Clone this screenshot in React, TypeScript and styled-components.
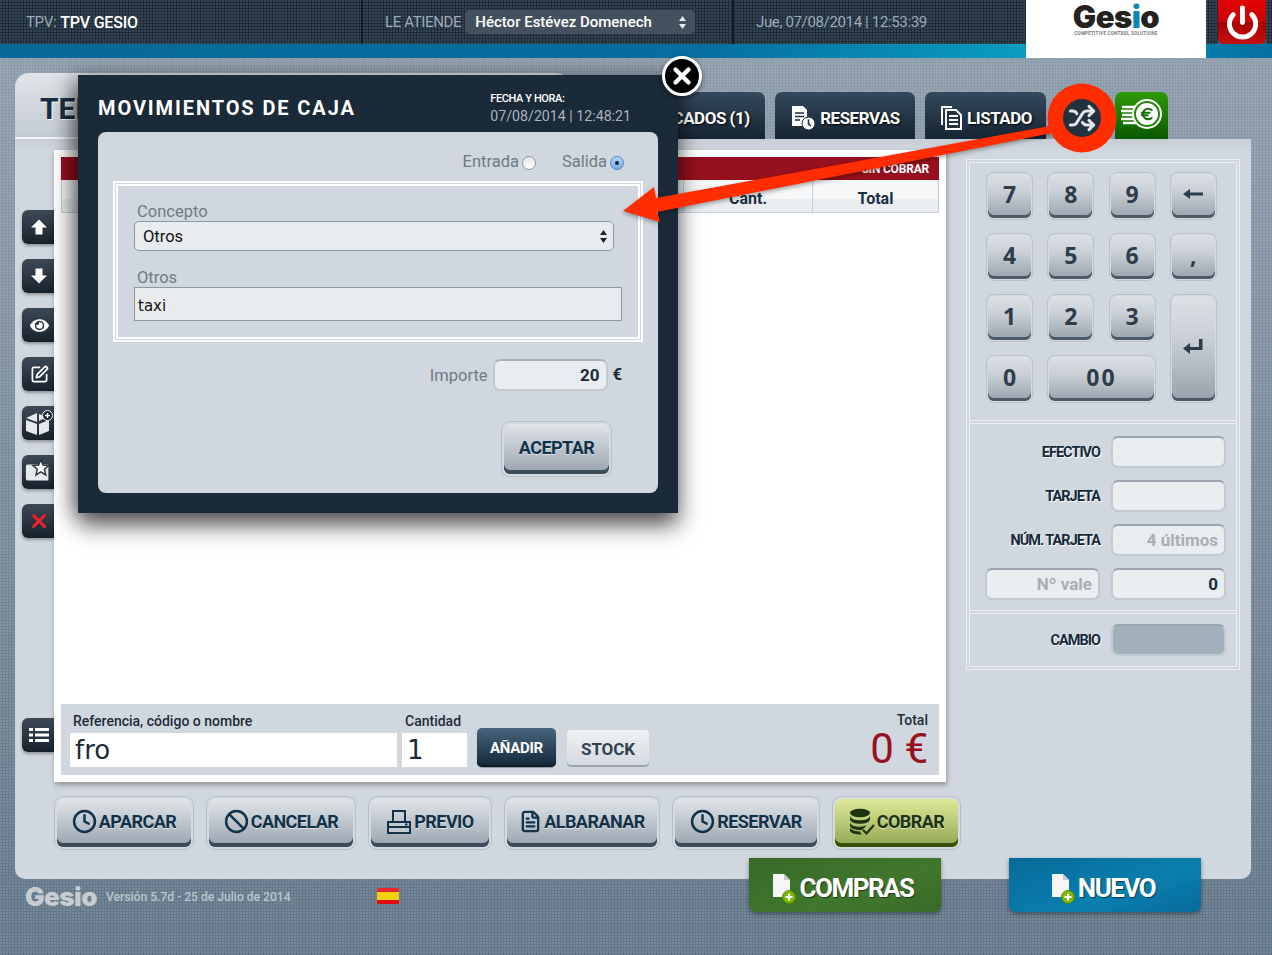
import React from "react";
import styled, { createGlobalStyle } from "styled-components";
import { Ban, Clock, Euro as EuroSign, FileText, Power, Shuffle, SquarePen, X } from "lucide-react";
import { FaEye } from "react-icons/fa";

const GlobalStyle = createGlobalStyle`
  html, body {
    margin: 0;
    padding: 0;
    background: #64788a;
  }
  * {
    box-sizing: border-box;
  }
`;

const font = `Roboto, "Liberation Sans", sans-serif`;
const digitFont = `"DejaVu Sans", Roboto, sans-serif`;
const keyFont = `"Open Sans", "DejaVu Sans", Roboto, sans-serif`;
const dots = `radial-gradient(circle at 1px 1px, rgba(255,255,255,.12) 1px, transparent 1px)`;
const inkBlue = "#12324a";
const panelGray = "#d0d7de";

const Page = styled.div`
  position: relative;
  width: 1272px;
  height: 955px;
  overflow: hidden;
  font-family: ${font};
  background-image: ${dots}, linear-gradient(180deg, #8c9baa 60px, #8292a2 300px, #63778a 900px);
  background-size: 3px 3px, auto;
`;

/* top bar */
const TopBar = styled.header`
  display: flex;
  height: 58px;
  background-image: linear-gradient(
    90deg,
    #07699a 0,
    #066f9f 55%,
    #0a9fc2 82%,
    #066f9f 100%
  );
`;
const TopDark = styled.div`
  display: flex;
  flex: 1;
  height: 44px;
  background-color: #1c2c3b;
  background-image: ${dots};
  background-size: 3px 3px;
`;
const TopCell = styled.div<{ $w: number; $pad: number }>`
  display: flex;
  align-items: center;
  width: ${(p) => p.$w}px;
  padding-left: ${(p) => p.$pad}px;
  border-right: 2px solid #111c26;
  font-size: 15px;
  letter-spacing: -0.35px;
  color: #9dabb7;
  &:last-child {
    border-right: none;
    flex: 1;
  }
`;
const TopStrong = styled.strong`
  margin-left: 4px;
  font-size: 16px;
  font-weight: 500;
  letter-spacing: -0.2px;
  color: #fff;
`;
const UserSelect = styled.div`
  display: flex;
  align-items: center;
  justify-content: space-between;
  width: 230px;
  height: 24px;
  margin-left: 4px;
  padding: 0 8px 0 10px;
  border-radius: 5px;
  background: #44505e;
  font-size: 15px;
  font-weight: 500;
  letter-spacing: 0;
  color: #fff;
`;
const LogoCell = styled.div`
  display: flex;
  flex-direction: column;
  align-items: center;
  width: 180px;
  height: 58px;
  padding-top: 3px;
  background: #fff;
`;
const LogoWord = styled.span<{ $size: number; $color: string }>`
  font-family: "Inter", ${font};
  font-weight: 900;
  font-size: ${(p) => p.$size}px;
  line-height: 0.9;
  letter-spacing: -0.5px;
  color: ${(p) => p.$color};
`;
const LogoDot = styled.span<{ $color: string }>`
  color: ${(p) => p.$color};
`;
const LogoClaim = styled.span`
  font-size: 4.5px;
  font-weight: 700;
  line-height: 5px;
  letter-spacing: 0.25px;
  color: #777;
`;
const TopGap = styled.div`
  width: 12px;
  height: 44px;
  background-color: #1c2c3b;
  background-image: ${dots};
  background-size: 3px 3px;
`;
const PowerButton = styled.div`
  display: flex;
  align-items: center;
  justify-content: center;
  width: 48px;
  height: 44px;
  border-radius: 0 0 5px 5px;
  background: linear-gradient(180deg, #e30404 0, #c80202 50%, #a80000 51%, #c41010 100%);
  color: #fff;
`;
const TopEnd = styled(TopGap)`
  width: 6px;
`;

/* main panel */
const Body = styled.div`
  width: 1236px;
  margin: 15px 0 0 15px;
`;
const TabRow = styled.div`
  display: flex;
  align-items: flex-end;
  height: 66px;
`;
const TitleTab = styled.div`
  display: flex;
  align-items: center;
  align-self: stretch;
  width: 555px;
  padding: 6px 0 0 25px;
  border-radius: 14px 14px 0 0;
  border-bottom: 2px solid #f0f3f5;
  background: linear-gradient(180deg, #dfe4e8 0, #c4cbd2 100%);
  font-size: 30px;
  font-weight: 700;
  color: #1b2f44;
  text-shadow: 1px 1px 0 #fff;
`;
const Tab = styled.div<{ $w: number; $ml?: number; $pr?: number }>`
  display: flex;
  align-items: center;
  justify-content: center;
  gap: 4px;
  width: ${(p) => p.$w}px;
  height: 47px;
  margin-left: ${(p) => p.$ml ?? 10}px;
  padding-top: 4px;
  padding-right: ${(p) => p.$pr ?? 0}px;
  border-radius: 7px 7px 0 0;
  background: linear-gradient(180deg, #34495c 0, #162433 100%);
  font-size: 17px;
  font-weight: 700;
  letter-spacing: -0.5px;
  white-space: nowrap;
  color: #fff;
  text-shadow: 1px 1px 2px #000;
`;
const MoneyTab = styled(Tab)`
  padding-top: 0;
  padding-bottom: 3px;
  background: linear-gradient(180deg, #2f9a08 0, #0a5800 100%);
`;
const Panel = styled.div`
  display: flex;
  height: 740px;
  border-radius: 0 0 10px 10px;
  background: linear-gradient(180deg, #c7ced5 0, ${panelGray} 12px);
`;
const LeftArea = styled.div`
  display: flex;
  flex-direction: column;
  width: 946px;
  padding-top: 11px;
`;
const WorkRow = styled.div`
  display: flex;
  height: 632px;
`;
const Rail = styled.div`
  display: flex;
  flex-direction: column;
  gap: 15px;
  width: 39px;
  padding: 60px 0 0 7px;
`;
const RailButton = styled.div<{ $push?: number }>`
  display: flex;
  align-items: center;
  justify-content: center;
  width: 32px;
  height: 34px;
  margin-top: ${(p) => p.$push ?? 0}px;
  padding-left: 2px;
  border-radius: 6px 0 0 6px;
  background: linear-gradient(180deg, #3d4a56 0, #17222c 100%);
  box-shadow: 0 2px 3px rgba(0, 0, 0, 0.3);
  color: #fff;
`;
const Sheet = styled.div`
  display: flex;
  flex-direction: column;
  width: 892px;
  padding: 7px;
  background: #fff;
  box-shadow: 1px 3px 5px rgba(0, 0, 0, 0.3);
`;
const RedBar = styled.div`
  height: 23px;
  padding: 5px 10px 0 0;
  background: #97101f;
  text-align: right;
  font-size: 12px;
  font-weight: 700;
  letter-spacing: -0.2px;
  color: #fff;
`;
const TableHead = styled.div`
  display: flex;
  height: 33px;
  border: 1px solid #c6ced6;
  border-top: none;
  background: linear-gradient(180deg, #f6f7f8 0, #f6f7f8 60%, #e9edf0 61%);
`;
const HeadCell = styled.div<{ $w?: number }>`
  display: flex;
  align-items: center;
  justify-content: center;
  flex: ${(p) => (p.$w ? `0 0 ${p.$w}px` : 1)};
  padding-top: 4px;
  border-left: 1px solid #c6ced6;
  font-size: 16px;
  font-weight: 700;
  color: #1b2f44;
  &:first-child {
    border-left: none;
  }
`;
const TableBody = styled.div`
  flex: 1;
`;
const EntryBar = styled.div`
  display: flex;
  align-items: flex-end;
  height: 71px;
  padding: 0 11px 8px 9px;
  background: ${panelGray};
`;
const EntryField = styled.div<{ $w: number; $ml?: number }>`
  display: flex;
  flex-direction: column;
  width: ${(p) => p.$w}px;
  margin-left: ${(p) => p.$ml ?? 0}px;
`;
const EntryLabel = styled.div`
  height: 20px;
  padding-left: 3px;
  font-size: 14px;
  font-weight: 500;
  color: #1f2d3a;
`;
const EntryInput = styled.div`
  height: 34px;
  padding-left: 5px;
  background: #fff;
  font-family: ${digitFont};
  font-size: 26px;
  line-height: 34px;
  color: #1c2a36;
`;
const AddButton = styled.div`
  display: flex;
  align-items: center;
  justify-content: center;
  width: 79px;
  height: 39px;
  margin-left: 10px;
  border-radius: 5px;
  background: linear-gradient(180deg, #48647c 0, #13273a 100%);
  box-shadow: inset 0 -2px 0 #0f1c28, 0 1px 1px rgba(0, 0, 0, 0.3);
  font-size: 15px;
  font-weight: 700;
  letter-spacing: -0.3px;
  color: #fff;
`;
const StockButton = styled.div`
  display: flex;
  align-items: center;
  justify-content: center;
  width: 82px;
  height: 37px;
  margin-left: 11px;
  border-radius: 4px;
  background: linear-gradient(180deg, #f0f2f4 0, #d3d8dd 100%);
  box-shadow: inset 0 -2px 0 #9aa4ad;
  font-size: 17px;
  font-weight: 700;
  letter-spacing: -0.1px;
  color: #33424f;
`;
const TotalBox = styled.div`
  display: flex;
  flex-direction: column;
  align-items: flex-end;
  margin-left: auto;
`;
const TotalLabel = styled.div`
  height: 16px;
  font-size: 14px;
  line-height: 16px;
  font-weight: 500;
  color: #1f2d3a;
`;
const TotalValue = styled.div`
  font-size: 42px;
  line-height: 42px;
  height: 42px;
  margin-bottom: -3px;
  color: #97101f;
`;

/* action buttons */
const ActionRow = styled.div`
  display: flex;
  gap: 12px;
  margin-top: 14px;
  padding-left: 39px;
`;
const ActionButton = styled.div<{ $w: number; $go?: boolean }>`
  display: flex;
  align-items: center;
  justify-content: center;
  gap: 2px;
  width: ${(p) => p.$w}px;
  height: 54px;
  padding-bottom: 3px;
  border: 3px solid transparent;
  border-radius: 9px;
  outline: 1px solid #b6bfc8;
  outline-offset: -1px;
  background: ${(p) =>
      p.$go
        ? "linear-gradient(180deg, #dfe99a 0, #8fa552 100%)"
        : "linear-gradient(180deg, #e1e5ea 0, #98a2ad 100%)"}
      padding-box,
    #d4dae0 border-box;
  box-shadow: inset 0 -4px 0 ${(p) => (p.$go ? "#3b4f05" : "#3c4c5b")};
  font-size: 18px;
  font-weight: 700;
  letter-spacing: -0.55px;
  color: ${(p) => (p.$go ? "#1c3310" : inkBlue)};
  text-shadow: 0 1px 0 rgba(255, 255, 255, 0.6);
`;

/* right column */
const RightColumn = styled.div`
  width: 274px;
  height: 511px;
  margin: 20px 0 0 5px;
  border: 4px double #eceff2;
`;
const Section = styled.div<{ $h: number }>`
  height: ${(p) => p.$h}px;
  & + & {
    border-top: 4px double #eceff2;
  }
`;
const KeyGrid = styled.div`
  display: grid;
  grid-template-columns: repeat(4, 47px);
  grid-auto-rows: 48px;
  column-gap: 14.3px;
  row-gap: 13px;
  padding: 9px 0 0 16px;
`;
const Key = styled.div<{ $wide?: boolean; $tall?: boolean }>`
  display: flex;
  align-items: center;
  justify-content: center;
  padding-bottom: 4px;
  border: 2px solid transparent;
  border-radius: 8px;
  outline: 1px solid #b9c1c9;
  outline-offset: -1px;
  background: linear-gradient(180deg, #dce1e6 0, #c9cfd5 40%, #98a2ac 100%) padding-box,
    #d4dae0 border-box;
  box-shadow: inset 0 -3px 0 #4c5a67;
  font-family: ${keyFont};
  font-size: 23px;
  font-weight: 700;
  color: #2e3d4b;
  grid-column: ${(p) => (p.$wide ? "span 2" : p.$tall ? "4" : "auto")};
  grid-row: ${(p) => (p.$tall ? "3 / 5" : "auto")};
  letter-spacing: ${(p) => (p.$wide ? "2px" : "0")};
`;
const PayBody = styled.div<{ $top: number }>`
  display: flex;
  flex-direction: column;
  gap: 12px;
  padding: ${(p) => p.$top}px 10px 0 0;
`;
const PayRow = styled.div`
  display: flex;
  align-items: center;
  justify-content: flex-end;
  gap: 11px;
`;
const PayLabel = styled.div`
  font-size: 14.5px;
  font-weight: 700;
  letter-spacing: -1px;
  color: #16293a;
  text-shadow: 1px 1px 0 #fff;
`;
const PayInput = styled.div<{ $dark?: boolean; $muted?: boolean }>`
  width: 115px;
  height: 32px;
  padding: 0 6px;
  border: 2px solid #c2cad1;
  border-top-color: #9aa5af;
  border-radius: 7px;
  background: ${(p) => (p.$dark ? "#a2b0bc" : "#e9edf0")};
  text-align: right;
  font-size: 17px;
  font-weight: 700;
  line-height: 28px;
  color: ${(p) => (p.$muted ? "#a9aeb2" : "#1b2a38")};
`;

/* footer */
const Footer = styled.footer`
  position: relative;
  display: flex;
  height: 54px;
  margin: -21px 0 0 15px;
  padding-left: 11px;
`;
const FooterInfo = styled.div`
  display: flex;
  align-items: center;
  height: 24px;
  margin-top: 27px;
`;
const Version = styled.span`
  width: 281px;
  padding-left: 10px;
  font-size: 12.1px;
  font-weight: 500;
  color: #bcc5cd;
`;
const FootLogo = styled.div`
  display: flex;
  justify-content: center;
  width: 70px;
`;
const Flag = styled.div`
  width: 22px;
  height: 16px;
  margin-top: -2px;
  border-radius: 1px;
  background: linear-gradient(180deg, #e8292c 0 25%, #f5d10a 25% 75%, #e00b0b 75% 100%);
`;
const BottomTab = styled.div<{ $color: string; $ml: number }>`
  display: flex;
  align-items: center;
  justify-content: center;
  gap: 2px;
  width: 192px;
  height: 54px;
  margin-left: ${(p) => p.$ml}px;
  padding: 6px 5px 0 0;
  border-radius: 0 0 7px 7px;
  background: ${(p) => p.$color};
  box-shadow: 0 2px 4px rgba(0, 0, 0, 0.4);
  font-size: 26px;
  font-weight: 700;
  letter-spacing: -1.5px;
  color: #fff;
  text-shadow: 1px 1px 1px rgba(0, 0, 0, 0.5);
`;

/* dialog */
const Dialog = styled.section`
  position: absolute;
  left: 78px;
  top: 75px;
  display: flex;
  flex-direction: column;
  width: 600px;
  height: 438px;
  padding: 0 20px;
  background: #1b2a38;
  box-shadow: 0 12px 22px rgba(0, 0, 0, 0.65), -8px 0 18px rgba(0, 0, 0, 0.25);
`;
const DialogHead = styled.div`
  display: flex;
  align-items: center;
  justify-content: space-between;
  height: 57px;
  padding-right: 27px;
`;
const DialogTitle = styled.h2`
  margin: 8px 0 0;
  font-size: 20px;
  font-weight: 700;
  letter-spacing: 1.9px;
  color: #fff;
`;
const Stamp = styled.div`
  display: flex;
  flex-direction: column;
  gap: 3px;
  margin-top: 8px;
  font-size: 14.2px;
  color: #a9b5bf;
`;
const StampLabel = styled.span`
  font-size: 11px;
  font-weight: 500;
  letter-spacing: -0.4px;
  color: #fff;
`;
const DialogBody = styled.div`
  display: flex;
  flex-direction: column;
  height: 361px;
  border-radius: 8px;
  background: ${panelGray};
`;
const RadioRow = styled.div`
  display: flex;
  align-items: center;
  justify-content: flex-end;
  gap: 26px;
  height: 49px;
  padding: 9px 34px 0 0;
`;
const RadioItem = styled.div`
  display: flex;
  align-items: center;
  gap: 3px;
  font-size: 16.5px;
  color: #6f7a84;
`;
const Radio = styled.span<{ $on?: boolean }>`
  display: flex;
  align-items: center;
  justify-content: center;
  width: 14px;
  height: 14px;
  margin-top: 3px;
  border: 1px solid ${(p) => (p.$on ? "#4d86c6" : "#8b949c")};
  border-radius: 50%;
  background: ${(p) =>
    p.$on
      ? "linear-gradient(180deg, #b9d4f2, #79a9e2)"
      : "linear-gradient(180deg, #e3e5e7, #fff)"};
  &::after {
    content: "";
    display: ${(p) => (p.$on ? "block" : "none")};
    width: 4px;
    height: 4px;
    border-radius: 50%;
    background: #13243a;
  }
`;
const FieldBox = styled.div`
  height: 161px;
  margin: 0 15px;
  padding: 15px 0 0 16px;
  border: 5px double #fff;
`;
const FieldLabel = styled.div`
  height: 20px;
  padding: 1px 0 0 3px;
  font-size: 16.5px;
  line-height: 20px;
  color: #6f7a84;
`;
const SelectBox = styled.div`
  display: flex;
  align-items: center;
  justify-content: space-between;
  width: 480px;
  height: 30px;
  margin-bottom: 16px;
  padding: 0 5px 0 8px;
  border: 1px solid #8d989f;
  border-radius: 5px;
  background: #e8ecef;
  font-size: 16.5px;
  color: #111;
`;
const TextBox = styled.div`
  width: 488px;
  height: 34px;
  padding-left: 3px;
  border: 1px solid #8d989f;
  background: #e8ecef;
  font-family: ${digitFont};
  font-size: 15px;
  line-height: 36px;
  color: #111;
`;
const AmountRow = styled.div`
  display: flex;
  align-items: center;
  justify-content: flex-end;
  gap: 5px;
  margin-top: 17px;
  padding-right: 36px;
  font-size: 16.5px;
  color: #6f7a84;
`;
const AmountInput = styled.div`
  width: 115px;
  height: 32px;
  padding-right: 6px;
  border: 2px solid #c2cad1;
  border-top-color: #aab3bb;
  border-radius: 7px;
  background: #e9edf0;
  text-align: right;
  font-size: 17px;
  font-weight: 700;
  line-height: 29px;
  color: #1b2a38;
`;
const Euro = styled.span`
  font-weight: 700;
  color: #1b2a38;
  margin-top: -2px;
`;
const ConfirmRow = styled.div`
  display: flex;
  justify-content: flex-end;
  margin-top: 30px;
  padding-right: 46px;
`;
const ConfirmButton = styled(ActionButton)`
  height: 56px;
  padding-top: 0;
`;
const CloseButton = styled.div`
  position: absolute;
  left: 662px;
  top: 56px;
  display: flex;
  align-items: center;
  justify-content: center;
  width: 40px;
  height: 40px;
  border: 3px solid #fff;
  border-radius: 50%;
  background: #000;
  box-shadow: 0 2px 5px rgba(0, 0, 0, 0.5);
  color: #fff;
`;
const Annotation = styled.svg`
  position: absolute;
  left: 0;
  top: 0;
  pointer-events: none;
`;

const UpDown = ({ fill }: { fill: string }) => (
  <svg width="9" height="15" viewBox="0 0 9 15">
    <path d="M4.5 1 8 6H1zM4.5 14 1 9h7z" fill={fill} />
  </svg>
);
const BlockArrow = ({ down }: { down?: boolean }) => (
  <svg width="18" height="18" viewBox="0 0 18 18" style={down ? { transform: "rotate(180deg)" } : undefined}>
    <path d="M9 1.5 17 9.5H12.5V16.5H5.5V9.5H1z" fill="#fff" />
  </svg>
);
const BoxPlus = () => (
  <svg width="30" height="30" viewBox="0 0 30 30">
    <path d="M2 10 13 5V14L2 10ZM2 12 13 16V27L2 23ZM15 16 25 12V23L15 27ZM15 6 23 9 15 13Z" fill="#e6e8ea" />
    <circle cx="23.5" cy="7.5" r="5" fill="#1b2732" stroke="#fff" strokeWidth="1" />
    <path d="M21 7.5h5M23.5 5v5" stroke="#fff" strokeWidth="1.3" />
  </svg>
);
const StarCard = () => (
  <svg width="32" height="30" viewBox="0 0 32 30">
    <path d="M2 9Q2 7 4 7H26V24H4Q2 24 2 22Z" fill="#e6e8ea" />
    <path
      d="m18 2 2.4 5.6 6 .5-4.6 4 1.4 6-5.2-3.2-5.2 3.2 1.4-6-4.6-4 6-.5z"
      fill="#fff"
      stroke="#2a3640"
      strokeWidth="1.6"
    />
  </svg>
);
const ListIcon = () => (
  <svg width="20" height="16" viewBox="0 0 20 16" fill="#fff">
    <rect x="0" y="1" width="4" height="3" />
    <rect x="6" y="1" width="14" height="3" />
    <rect x="0" y="6.5" width="4" height="3" />
    <rect x="6" y="6.5" width="14" height="3" />
    <rect x="0" y="12" width="4" height="3" />
    <rect x="6" y="12" width="14" height="3" />
  </svg>
);
const ReservasIcon = () => (
  <svg width="26" height="26" viewBox="0 0 26 26">
    <path d="M2 1H13L17 5V21H2Z" fill="#fff" />
    <path d="M5 8H14M5 11.5H14M5 15H10" stroke="#1d2f40" strokeWidth="1.6" />
    <circle cx="18.5" cy="18.5" r="6.5" fill="#fff" stroke="#1d2f40" strokeWidth="1" />
    <path d="M18.5 14.5V19L21 21" stroke="#1d2f40" strokeWidth="1.6" fill="none" />
  </svg>
);
const ListadoIcon = () => (
  <svg width="24" height="26" viewBox="0 0 24 26" fill="none" stroke="#fff">
    <path d="M3 20V2H13" strokeWidth="2" />
    <path d="M7 5H17L22 10V24H7Z" fill="#223445" strokeWidth="2" />
    <path d="M10 11H19M10 15H19M10 19H19" strokeWidth="2" />
  </svg>
);
const MoneyIcon = () => (
  <svg width="42" height="30" viewBox="0 0 42 30">
    <path d="M1 8H16M0 12H14M1 16H14M0 20H14M2 24H20" stroke="#fff" strokeWidth="2.6" />
    <circle cx="26" cy="15" r="14" fill="#1f8405" stroke="#fff" strokeWidth="2" />
    <circle cx="26" cy="15" r="11" fill="#fff" />
    <EuroSign x={18} y={7} width={16} height={16} color="#17700a" strokeWidth={3} />
  </svg>
);
const PrinterIcon = () => (
  <svg width="26" height="26" viewBox="0 0 26 26" fill="none" stroke={inkBlue} strokeWidth="2">
    <path d="M7 13V2H19V13" />
    <path d="M2 13H24V24H2Z" fill="#c5cad0" />
    <path d="M2 18H24" />
    <path d="M19 15.5h2.5" />
  </svg>
);
const CoinsIcon = () => (
  <svg width="26" height="28" viewBox="0 0 26 28" fill="#1c3310">
    <ellipse cx="11" cy="5" rx="10" ry="4.2" />
    <path d="M1 8c1 3 5 4.2 10 4.2S20 11 21 8v3.5c-1 3-5 4.2-10 4.2S2 14.500 1 11.500Z" />
    <path d="M1 14.500c1 3 5 4.200 10 4.200 3 0 5-.5 7-1.400L13 22c-6 .3-11-1-12-4Z" />
    <path d="M1 20c2 2.500 6 3.500 10 3.500l1.500 3C7 26.500 2 25.500 1 23Z" />
    <path d="m14 22 3.500 3.500L25 17" fill="none" stroke="#1c3310" strokeWidth="2.200" />
  </svg>
);
const NewDocIcon = () => (
  <svg width="26" height="32" viewBox="0 0 26 32">
    <path d="M2 2H13L19 8V25H2Z" fill="#f6f6f6" />
    <path d="M13 2 19 8H13Z" fill="#c9c9c9" />
    <circle cx="18" cy="25" r="6.500" fill="#7db706" stroke="#4b7d00" strokeWidth="0.8" />
    <path d="M14.500 25h7M18 21.500v7" stroke="#fff" strokeWidth="2.200" />
  </svg>
);
const ReturnIcon = () => (
  <svg width="22" height="18" viewBox="0 0 22 18" fill="#2e3d4b">
    <path d="M17 1h3.500v11H8v4L1 10.500 8 5v4h9z" />
  </svg>
);
const LeftArrowIcon = () => (
  <svg width="20" height="12" viewBox="0 0 20 12" fill="#2e3d4b">
    <path d="M0 6 7 1V4.500H20V7.500H7V11Z" />
  </svg>
);

const Logo = ({ size, color, dot }: { size: number; color: string; dot: string }) => (
  <LogoWord $size={size} $color={color}>
    Ges<LogoDot $color={dot}>i</LogoDot>o
  </LogoWord>
);

const keys = ["7", "8", "9", "←", "4", "5", "6", ",", "1", "2", "3"];
const actions = [
  { label: "APARCAR", w: 140, icon: <Clock size={25} color={inkBlue} strokeWidth={2.4} /> },
  { label: "CANCELAR", w: 150, icon: <Ban size={25} color={inkBlue} strokeWidth={2.4} /> },
  { label: "PREVIO", w: 124, icon: <PrinterIcon /> },
  { label: "ALBARANAR", w: 156, icon: <FileText size={23} color={inkBlue} strokeWidth={2.4} /> },
  { label: "RESERVAR", w: 148, icon: <Clock size={25} color={inkBlue} strokeWidth={2.4} /> },
];

const App = () => {
  return (
    <Page>
      <GlobalStyle />
      <TopBar>
        <TopDark>
          <TopCell $w={363} $pad={26}>
            TPV:<TopStrong>TPV GESIO</TopStrong>
          </TopCell>
          <TopCell $w={371} $pad={22}>
            <span>LE ATIENDE</span>
            <UserSelect>
              Héctor Estévez Domenech
              <UpDown fill="#e6e9ec" />
            </UserSelect>
          </TopCell>
          <TopCell $w={292} $pad={22}>
            Jue, 07/08/2014 | 12:53:39
          </TopCell>
        </TopDark>
        <LogoCell>
          <Logo size={31} color="#25211f" dot="#0a86b8" />
          <LogoClaim>COMPETITIVE CONTROL SOLUTIONS</LogoClaim>
        </LogoCell>
        <TopGap />
        <PowerButton>
          <Power size={35} strokeWidth={3.4} />
        </PowerButton>
        <TopEnd />
      </TopBar>

      <Body>
        <TabRow>
          <TitleTab>TERMINAL</TitleTab>
          <Tab $w={135} $ml={60} $pr={14}>
            APARCADOS (1)
          </Tab>
          <Tab $w={140}>
            <ReservasIcon />
            RESERVAS
          </Tab>
          <Tab $w={121}>
            <ListadoIcon />
            LISTADO
          </Tab>
          <MoneyTab $w={53} $ml={69}>
            <MoneyIcon />
          </MoneyTab>
        </TabRow>
        <Panel>
          <LeftArea>
            <WorkRow>
              <Rail>
                <RailButton>
                  <BlockArrow />
                </RailButton>
                <RailButton>
                  <BlockArrow down />
                </RailButton>
                <RailButton>
                  <FaEye size={19} />
                </RailButton>
                <RailButton>
                  <SquarePen size={19} strokeWidth={2.2} />
                </RailButton>
                <RailButton>
                  <BoxPlus />
                </RailButton>
                <RailButton>
                  <StarCard />
                </RailButton>
                <RailButton>
                  <X size={22} color="#f0242a" strokeWidth={3.2} />
                </RailButton>
                <RailButton $push={165}>
                  <ListIcon />
                </RailButton>
              </Rail>
              <Sheet>
                <RedBar>SIN COBRAR</RedBar>
                <TableHead>
                  <HeadCell>Producto</HeadCell>
                  <HeadCell $w={129}>Cant.</HeadCell>
                  <HeadCell $w={126}>Total</HeadCell>
                </TableHead>
                <TableBody />
                <EntryBar>
                  <EntryField $w={327}>
                    <EntryLabel>Referencia, código o nombre</EntryLabel>
                    <EntryInput>fro</EntryInput>
                  </EntryField>
                  <EntryField $w={65} $ml={5}>
                    <EntryLabel>Cantidad</EntryLabel>
                    <EntryInput>1</EntryInput>
                  </EntryField>
                  <AddButton>AÑADIR</AddButton>
                  <StockButton>STOCK</StockButton>
                  <TotalBox>
                    <TotalLabel>Total</TotalLabel>
                    <TotalValue>0 €</TotalValue>
                  </TotalBox>
                </EntryBar>
              </Sheet>
            </WorkRow>
            <ActionRow>
              {actions.map((a) => (
                <ActionButton key={a.label} $w={a.w}>
                  {a.icon}
                  {a.label}
                </ActionButton>
              ))}
              <ActionButton $w={129} $go>
                <CoinsIcon />
                COBRAR
              </ActionButton>
            </ActionRow>
          </LeftArea>
          <RightColumn>
            <Section $h={257}>
              <KeyGrid>
                {keys.map((k) => (
                  <Key key={k}>{k === "←" ? <LeftArrowIcon /> : k}</Key>
                ))}
                <Key $tall>
                  <ReturnIcon />
                </Key>
                <Key>0</Key>
                <Key $wide>00</Key>
              </KeyGrid>
            </Section>
            <Section $h={190}>
              <PayBody $top={12}>
                <PayRow>
                  <PayLabel>EFECTIVO</PayLabel>
                  <PayInput />
                </PayRow>
                <PayRow>
                  <PayLabel>TARJETA</PayLabel>
                  <PayInput />
                </PayRow>
                <PayRow>
                  <PayLabel>NÚM. TARJETA</PayLabel>
                  <PayInput $muted>4 últimos</PayInput>
                </PayRow>
                <PayRow>
                  <PayInput $muted>Nº vale</PayInput>
                  <PayInput>0</PayInput>
                </PayRow>
              </PayBody>
            </Section>
            <Section $h={56}>
              <PayBody $top={10}>
                <PayRow>
                  <PayLabel>CAMBIO</PayLabel>
                  <PayInput $dark />
                </PayRow>
              </PayBody>
            </Section>
          </RightColumn>
        </Panel>
      </Body>

      <Footer>
        <FooterInfo>
          <FootLogo>
            <Logo size={26} color="#c6ccd1" dot="#c6ccd1" />
          </FootLogo>
          <Version>Versión 5.7d - 25 de Julio de 2014</Version>
          <Flag />
        </FooterInfo>
        <BottomTab $color="linear-gradient(160deg, #37692a, #41772c 60%, #376a28)" $ml={350}>
          <NewDocIcon />
          COMPRAS
        </BottomTab>
        <BottomTab $color="linear-gradient(160deg, #066a99, #0a7fae 60%, #066a99)" $ml={68}>
          <NewDocIcon />
          NUEVO
        </BottomTab>
      </Footer>

      <Dialog>
        <DialogHead>
          <DialogTitle>MOVIMIENTOS DE CAJA</DialogTitle>
          <Stamp>
            <StampLabel>FECHA Y HORA:</StampLabel>
            07/08/2014 | 12:48:21
          </Stamp>
        </DialogHead>
        <DialogBody>
          <RadioRow>
            <RadioItem>
              Entrada <Radio />
            </RadioItem>
            <RadioItem>
              Salida <Radio $on />
            </RadioItem>
          </RadioRow>
          <FieldBox>
            <FieldLabel>Concepto</FieldLabel>
            <SelectBox>
              Otros
              <UpDown fill="#222" />
            </SelectBox>
            <FieldLabel>Otros</FieldLabel>
            <TextBox>taxi</TextBox>
          </FieldBox>
          <AmountRow>
            Importe
            <AmountInput>20</AmountInput>
            <Euro>€</Euro>
          </AmountRow>
          <ConfirmRow>
            <ConfirmButton $w={111}>ACEPTAR</ConfirmButton>
          </ConfirmRow>
        </DialogBody>
      </Dialog>
      <CloseButton>
        <X size={26} strokeWidth={4} />
      </CloseButton>

      <Annotation width="1272" height="955" viewBox="0 0 1272 955">
        <polygon
          points="623,211 654,187 656,198 1050,126 1052,133 657,212 660,222"
          fill="#ff2d00"
          style={{ filter: "drop-shadow(0 2px 2px rgba(0,0,0,.35))" }}
        />
        <circle cx="1082" cy="118" r="34.5" fill="#ff2d00" />
        <circle cx="1082" cy="118" r="19" fill="#22323f" />
        <Shuffle x={1068} y={104} width={28} height={28} color="#e3e6e8" strokeWidth={2.6} />
      </Annotation>
    </Page>
  );
};

export default App;
